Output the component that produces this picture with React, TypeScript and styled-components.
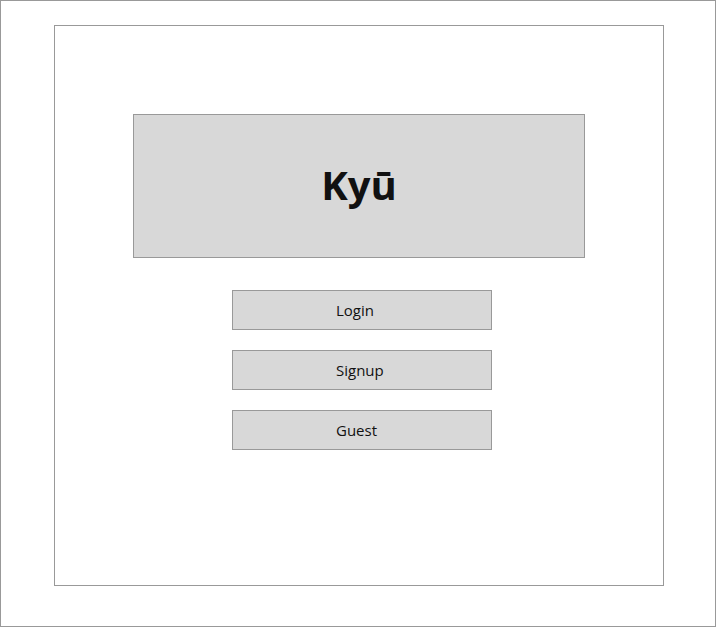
import React from "react";
import styled, { createGlobalStyle } from "styled-components";

const Global = createGlobalStyle`
  html, body { margin: 0; padding: 0; background: #fff; }
  body { font-family: "Open Sans", "DejaVu Sans", sans-serif; }
  * { box-sizing: border-box; }
`;

const Frame = styled.div`
  width: 716px;
  height: 627px;
  border: 1px solid #999;
  padding: 24px 0 0 53px;
  background: #fff;
`;

const Screen = styled.div`
  width: 610px;
  height: 561px;
  border: 1px solid #999;
  padding-top: 88px;
  display: flex;
  flex-direction: column;
  align-items: center;
`;

const TitleBox = styled.div`
  width: 452px;
  height: 144px;
  border: 1px solid #999;
  background: #d8d8d8;
  display: flex;
  align-items: center;
  justify-content: center;
`;

const Title = styled.h1`
  margin: 0 0 2px 0;
  font-family: "Open Sans", sans-serif;
  font-weight: 700;
  font-size: 40px;
  color: #111;
  line-height: 1;
`;

const ButtonStack = styled.div`
  margin-top: 32px;
  padding-left: 6px;
  display: flex;
  flex-direction: column;
  gap: 20px;
`;

const Button = styled.button`
  width: 260px;
  height: 40px;
  border: 1px solid #999;
  background: #d8d8d8;
  font-family: "Open Sans", sans-serif;
  font-size: 15px;
  color: #111;
  padding: 0 0 0 103px;
  display: flex;
  align-items: center;
  justify-content: flex-start;
`;

export default function App() {
  return (
    <>
      <Global />
      <Frame>
        <Screen>
          <TitleBox>
            <Title>Kyū</Title>
          </TitleBox>
          <ButtonStack>
            <Button>Login</Button>
            <Button>Signup</Button>
            <Button>Guest</Button>
          </ButtonStack>
        </Screen>
      </Frame>
    </>
  );
}
